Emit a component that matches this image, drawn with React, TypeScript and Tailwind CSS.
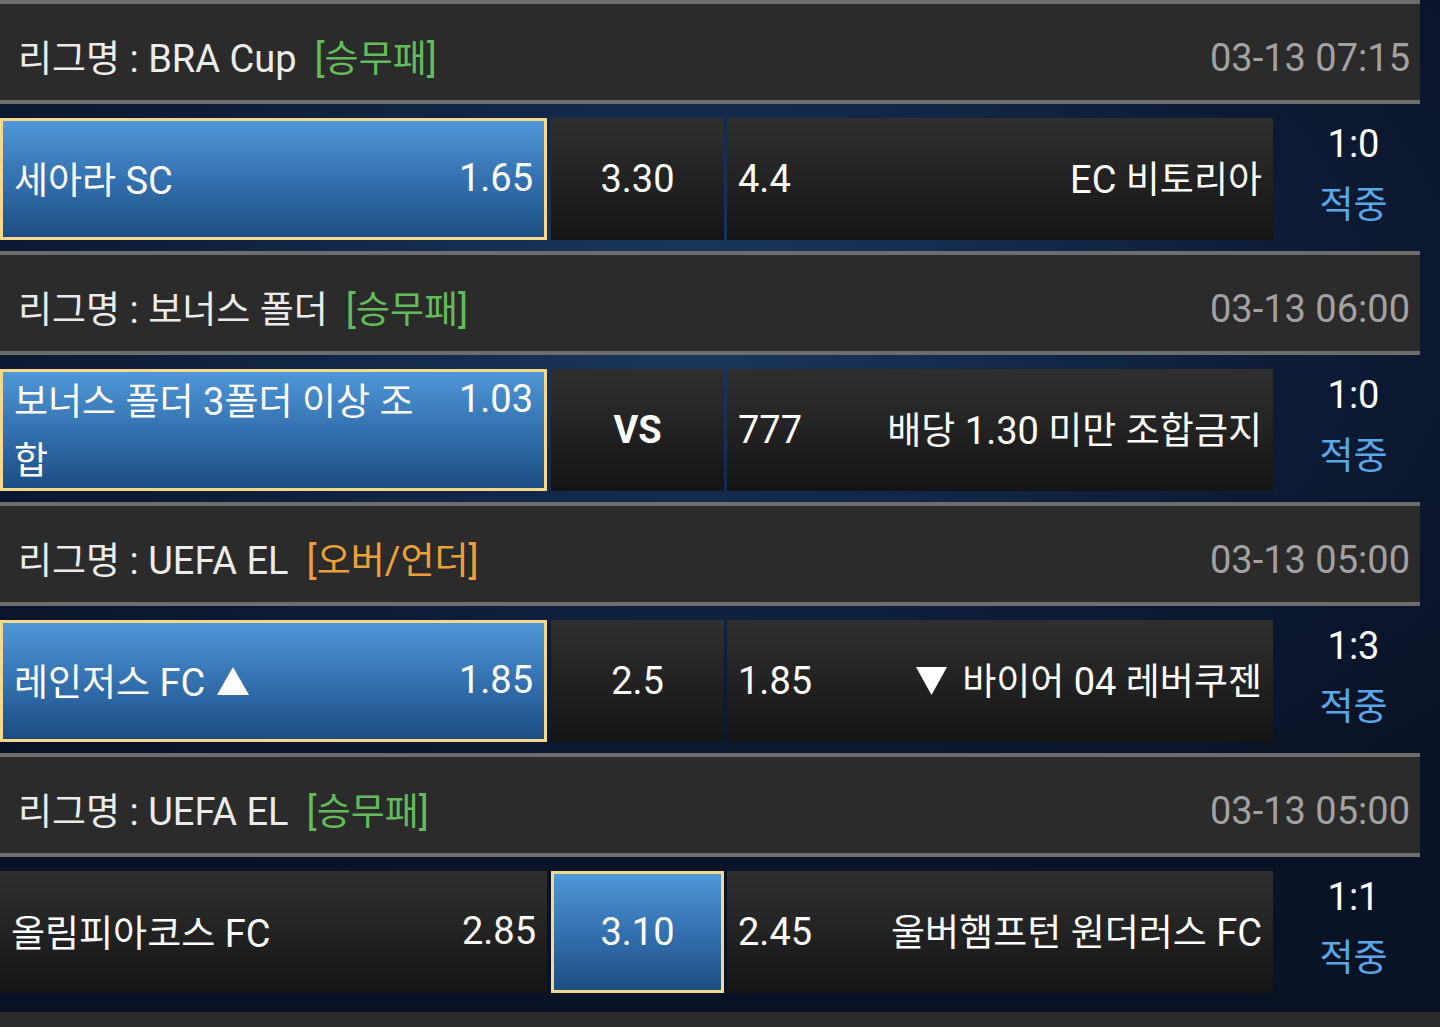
import React from "react";

type Block = {
  league: string;
  tag: string;
  tagColor: "green" | "orange";
  time: string;
  home: string;
  homeOdds: string;
  draw: string;
  drawBold?: boolean;
  awayOdds: string;
  away: string;
  score: string;
  sel: "home" | "draw";
  homeArrow?: boolean;
  awayArrow?: boolean;
};

const blocks: Block[] = [
  {
    league: "BRA Cup",
    tag: "[승무패]",
    tagColor: "green",
    time: "03-13 07:15",
    home: "세아라 SC",
    homeOdds: "1.65",
    draw: "3.30",
    awayOdds: "4.4",
    away: "EC 비토리아",
    score: "1:0",
    sel: "home",
  },
  {
    league: "보너스 폴더",
    tag: "[승무패]",
    tagColor: "green",
    time: "03-13 06:00",
    home: "보너스 폴더 3폴더 이상 조합",
    homeOdds: "1.03",
    draw: "VS",
    drawBold: true,
    awayOdds: "777",
    away: "배당 1.30 미만 조합금지",
    score: "1:0",
    sel: "home",
  },
  {
    league: "UEFA EL",
    tag: "[오버/언더]",
    tagColor: "orange",
    time: "03-13 05:00",
    home: "레인저스 FC",
    homeOdds: "1.85",
    draw: "2.5",
    awayOdds: "1.85",
    away: "바이어 04 레버쿠젠",
    score: "1:3",
    sel: "home",
    homeArrow: true,
    awayArrow: true,
  },
  {
    league: "UEFA EL",
    tag: "[승무패]",
    tagColor: "green",
    time: "03-13 05:00",
    home: "올림피아코스 FC",
    homeOdds: "2.85",
    draw: "3.10",
    awayOdds: "2.45",
    away: "울버햄프턴 원더러스 FC",
    score: "1:1",
    sel: "draw",
  },
];

function K({ t }: { t: string }) {
  const parts = t.split(/([\uAC00-\uD7A3\u3131-\u318E]+)/);
  return (
    <>
      {parts.map((p, i) =>
        /[\uAC00-\uD7A3\u3131-\u318E]/.test(p) ? (
          <span key={i} className="text-[37px] font-['Noto_Sans_CJK_KR',sans-serif]">
            {p}
          </span>
        ) : (
          <React.Fragment key={i}>{p}</React.Fragment>
        )
      )}
    </>
  );
}

function Up() {
  return (
    <svg width="34" height="30" viewBox="0 0 34 30" className="shrink-0">
      <polygon points="17,1 33,29 1,29" fill="#ffffff" />
    </svg>
  );
}

function Down() {
  return (
    <svg width="33" height="30" viewBox="0 0 33 30" className="shrink-0">
      <polygon points="1,1 32,1 16.5,29" fill="#ffffff" />
    </svg>
  );
}

const darkCell = "bg-[linear-gradient(180deg,#2f2f2f_0%,#222222_50%,#141414_100%)]";
const selCell =
  "border-[3px] border-[#f4d88c] bg-[linear-gradient(180deg,#4f97d7_0%,#3471b0_50%,#1d4d83_100%)]";

function Section({ b }: { b: Block }) {
  return (
    <div className="flex flex-col mb-[11px]">
      <div className="h-[4px] bg-[#6d6d6d]" />
      <div className="h-[96px] bg-[#2b2b2b] flex items-center justify-between pt-[12px] pl-[18px] pr-[10px]">
        <div className="flex items-center text-[#ececec] whitespace-nowrap">
          <span>
            <K t={`리그명 : ${b.league}`} />
          </span>
          <span
            className={`ml-[18px] ${b.tagColor === "green" ? "text-[#64bb5b]" : "text-[#eda03a]"}`}
          >
            <K t={b.tag} />
          </span>
        </div>
        <div className="text-[#a2a2a2]">{b.time}</div>
      </div>
      <div className="h-[4px] bg-[#6d6d6d]" />
      <div className="mt-[14px] h-[122px] flex">
        {/* home */}
        <div
          className={`w-[547px] shrink-0 flex items-center ${
            b.sel === "home" ? `${selCell} px-[11px]` : `${darkCell} px-[11px]`
          }`}
        >
          <div className="flex items-start w-full leading-[56px]">
            <div className="flex-1 min-w-0 flex items-center gap-[11px]">
              <span>
                <K t={b.home} />
              </span>
              {b.homeArrow && <Up />}
            </div>
            <div className="ml-[36px] shrink-0">{b.homeOdds}</div>
          </div>
        </div>
        {/* draw */}
        <div
          className={`ml-[4px] w-[173px] shrink-0 flex items-center justify-center ${
            b.sel === "draw" ? selCell : darkCell
          } ${b.drawBold ? "font-bold" : ""}`}
        >
          {b.draw}
        </div>
        {/* away */}
        <div className={`ml-[3px] w-[546px] shrink-0 flex items-center justify-between px-[11px] ${darkCell}`}>
          <span>{b.awayOdds}</span>
          <div className="flex items-center gap-[14px] whitespace-nowrap">
            {b.awayArrow && <Down />}
            <span>
              <K t={b.away} />
            </span>
          </div>
        </div>
        {/* result */}
        <div className="flex-1 flex flex-col items-center justify-center pl-[14px] pb-[10px] leading-[58px]">
          <span>{b.score}</span>
          <span className="text-[#5aa7e7]">
            <K t="적중" />
          </span>
        </div>
      </div>
    </div>
  );
}

export default function App() {
  return (
    <div className="min-h-screen w-full flex flex-col overflow-hidden text-white text-[38px] font-['Roboto','Noto_Sans_CJK_KR',sans-serif] bg-[radial-gradient(ellipse_70%_60%_at_48%_30%,#1c3a60_0%,#12284a_35%,#0c1a33_65%,#0a1226_100%)]">
      <div className="w-[1420px] flex flex-col">
        {blocks.map((b, i) => (
          <Section key={i} b={b} />
        ))}
      </div>
      <div className="mt-[8px] flex-1 w-full bg-[#2b2b2b]" />
    </div>
  );
}
